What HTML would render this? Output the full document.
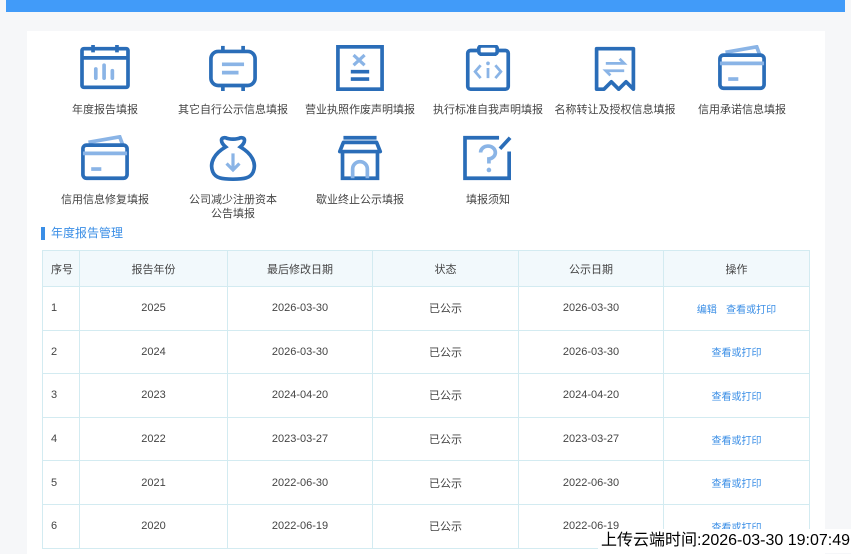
<!DOCTYPE html>
<html><head><meta charset="utf-8"><style>
*{margin:0;padding:0;box-sizing:border-box}
body{width:851px;height:554px;overflow:hidden;background:#f6f7f9;font-family:"Liberation Sans","Noto Sans CJK SC",sans-serif;position:relative;color:#555}
.top{position:absolute;left:6px;top:0;width:839px;height:12px;background:#419bf9}
.panel{position:absolute;left:27px;top:31px;width:798px;height:523px;background:#fff}
.it{position:absolute;width:128px;text-align:center;font-size:11px;color:#444;line-height:14px}
.it svg{display:block;margin:0 auto 12px;width:52px;height:46px}
.ttl{position:absolute;left:41px;top:227px;font-size:12px;color:#3a8ee6;border-left:4px solid #3a8ee6;padding-left:6px;line-height:13px}
table{position:absolute;left:42px;top:250px;border-collapse:collapse;font-size:11px;color:#444}
td,th{border:1px solid #d3ebf1;text-align:center;font-weight:normal;height:43.6px}
th{background:#f2f9fc;height:36px}
td:first-child,th:first-child{text-align:left;padding-left:8px}
a{color:#3a8ee6;text-decoration:none;font-size:10px}
.ov{position:absolute;left:598px;top:529px;background:#fff;color:#000;font-size:16px;padding:1px 3px;line-height:22px;white-space:nowrap}
</style></head><body>
<div class="top"></div>
<div class="panel"></div>
<div class="it" style="left:41px;top:45px"><svg viewBox="0 0 56 50"><rect x="3" y="4" width="50" height="42" rx="2" fill="none" stroke="#2a6db8" stroke-width="4"/><line x1="3" y1="14" x2="53" y2="14" stroke="#2a6db8" stroke-width="4"/><line x1="15" y1="0" x2="15" y2="8" stroke="#2a6db8" stroke-width="4"/><line x1="41" y1="0" x2="41" y2="8" stroke="#2a6db8" stroke-width="4"/><g stroke="#8ab4e6" stroke-width="4" stroke-linecap="round"><line x1="18" y1="26" x2="18" y2="36"/><line x1="27" y1="22" x2="27" y2="36"/><line x1="36" y1="28" x2="36" y2="36"/></g></svg>年度报告填报</div>
<div class="it" style="left:169px;top:45px"><svg viewBox="0 0 56 50"><rect x="4" y="7" width="48" height="37" rx="8" fill="none" stroke="#2a6db8" stroke-width="4"/><g stroke="#2a6db8" stroke-width="4"><line x1="17" y1="1" x2="17" y2="8"/><line x1="39" y1="1" x2="39" y2="8"/><line x1="17" y1="43" x2="17" y2="50"/><line x1="39" y1="43" x2="39" y2="50"/></g><g stroke="#8ab4e6" stroke-width="4"><line x1="16" y1="21" x2="40" y2="21"/><line x1="16" y1="30" x2="34" y2="30"/></g></svg>其它自行公示信息填报</div>
<div class="it" style="left:296px;top:45px"><svg viewBox="0 0 56 50"><rect x="4" y="2" width="48" height="46" fill="none" stroke="#2a6db8" stroke-width="4"/><g stroke="#8ab4e6" stroke-width="3.5"><line x1="21" y1="11" x2="33" y2="22"/><line x1="33" y1="11" x2="21" y2="22"/></g><g stroke="#2a6db8" stroke-width="4"><line x1="18" y1="29" x2="38" y2="29"/><line x1="18" y1="37" x2="38" y2="37"/></g></svg>营业执照作废声明填报</div>
<div class="it" style="left:424px;top:45px"><svg viewBox="0 0 56 50"><rect x="6" y="6" width="44" height="42" rx="3" fill="none" stroke="#2a6db8" stroke-width="4"/><rect x="18" y="1" width="20" height="9" rx="3" fill="#fff" stroke="#2a6db8" stroke-width="4"/><g stroke="#8ab4e6" stroke-width="3" fill="none"><polyline points="20,22 14,29 20,36"/><polyline points="36,22 42,29 36,36"/><line x1="28" y1="25" x2="28" y2="36"/></g><circle cx="28" cy="20" r="2" fill="#8ab4e6"/></svg>执行标准自我声明填报</div>
<div class="it" style="left:551px;top:45px"><svg viewBox="0 0 56 50"><path d="M8 48 V4 H48 V48 L40 40 L32 48 L24 40 L16 48 Z" fill="none" stroke="#2a6db8" stroke-width="4" stroke-linejoin="round"/><g stroke="#8ab4e6" stroke-width="3" fill="none"><polyline points="18,20 38,20 33,15"/><polyline points="38,28 18,28 23,33"/></g></svg>名称转让及授权信息填报</div>
<div class="it" style="left:678px;top:45px"><svg viewBox="0 0 56 50"><path d="M10 8 L44 2 L47 10" fill="none" stroke="#8ab4e6" stroke-width="4"/><rect x="4" y="11" width="48" height="36" rx="4" fill="none" stroke="#2a6db8" stroke-width="4"/><line x1="4" y1="20" x2="52" y2="20" stroke="#8ab4e6" stroke-width="4"/><line x1="13" y1="37" x2="24" y2="37" stroke="#8ab4e6" stroke-width="4"/></svg>信用承诺信息填报</div>
<div class="it" style="left:41px;top:135px"><svg viewBox="0 0 56 50"><path d="M10 8 L44 2 L47 10" fill="none" stroke="#8ab4e6" stroke-width="4"/><rect x="4" y="11" width="48" height="36" rx="4" fill="none" stroke="#2a6db8" stroke-width="4"/><line x1="4" y1="20" x2="52" y2="20" stroke="#8ab4e6" stroke-width="4"/><line x1="13" y1="37" x2="24" y2="37" stroke="#8ab4e6" stroke-width="4"/></svg>信用信息修复填报</div>
<div class="it" style="left:169px;top:135px"><svg viewBox="0 0 56 50"><path d="M20 13 C14 8 14 2 20 3 C24 5 32 5 36 3 C42 2 42 8 36 13 C48 20 54 30 50 40 C47 47 40 48 28 48 C16 48 9 47 6 40 C2 30 8 20 20 13 Z" fill="none" stroke="#2a6db8" stroke-width="4"/><g stroke="#8ab4e6" stroke-width="3.5" fill="none"><line x1="28" y1="20" x2="28" y2="38"/><polyline points="21,31 28,38 35,31"/></g></svg>公司减少注册资本<br>公告填报</div>
<div class="it" style="left:296px;top:135px"><svg viewBox="0 0 56 50"><line x1="10" y1="3" x2="46" y2="3" stroke="#2a6db8" stroke-width="4"/><path d="M6 18 L10 8 H46 L50 18 Z" fill="none" stroke="#2a6db8" stroke-width="4" stroke-linejoin="round"/><path d="M9 18 V47 H47 V18" fill="none" stroke="#2a6db8" stroke-width="4"/><path d="M20 47 V37 A8 8 0 0 1 36 37 V47" fill="none" stroke="#8ab4e6" stroke-width="4"/></svg>歇业终止公示填报</div>
<div class="it" style="left:424px;top:135px"><svg viewBox="0 0 56 50"><path d="M40 3 H3 V47 H51 V18" fill="none" stroke="#2a6db8" stroke-width="4"/><line x1="41" y1="15" x2="52" y2="3" stroke="#2a6db8" stroke-width="4"/><path d="M20 19 A8 7 0 1 1 29 26 V31" fill="none" stroke="#8ab4e6" stroke-width="4"/><circle cx="29" cy="38" r="2.5" fill="#8ab4e6"/></svg>填报须知</div>
<div class="ttl">年度报告管理</div>
<table>
<tr><th style="width:37px">序号</th><th style="width:148px">报告年份</th><th style="width:145px">最后修改日期</th><th style="width:146px">状态</th><th style="width:145px">公示日期</th><th style="width:146px">操作</th></tr>
<tr><td>1</td><td>2025</td><td>2026-03-30</td><td>已公示</td><td>2026-03-30</td><td><a>编辑</a>&nbsp;&nbsp;&nbsp;<a>查看或打印</a></td></tr>
<tr><td>2</td><td>2024</td><td>2026-03-30</td><td>已公示</td><td>2026-03-30</td><td><a>查看或打印</a></td></tr>
<tr><td>3</td><td>2023</td><td>2024-04-20</td><td>已公示</td><td>2024-04-20</td><td><a>查看或打印</a></td></tr>
<tr><td>4</td><td>2022</td><td>2023-03-27</td><td>已公示</td><td>2023-03-27</td><td><a>查看或打印</a></td></tr>
<tr><td>5</td><td>2021</td><td>2022-06-30</td><td>已公示</td><td>2022-06-30</td><td><a>查看或打印</a></td></tr>
<tr><td>6</td><td>2020</td><td>2022-06-19</td><td>已公示</td><td>2022-06-19</td><td><a>查看或打印</a></td></tr>
</table>
<div class="ov">上传云端时间:2026-03-30 19:07:49</div>
</body></html>
